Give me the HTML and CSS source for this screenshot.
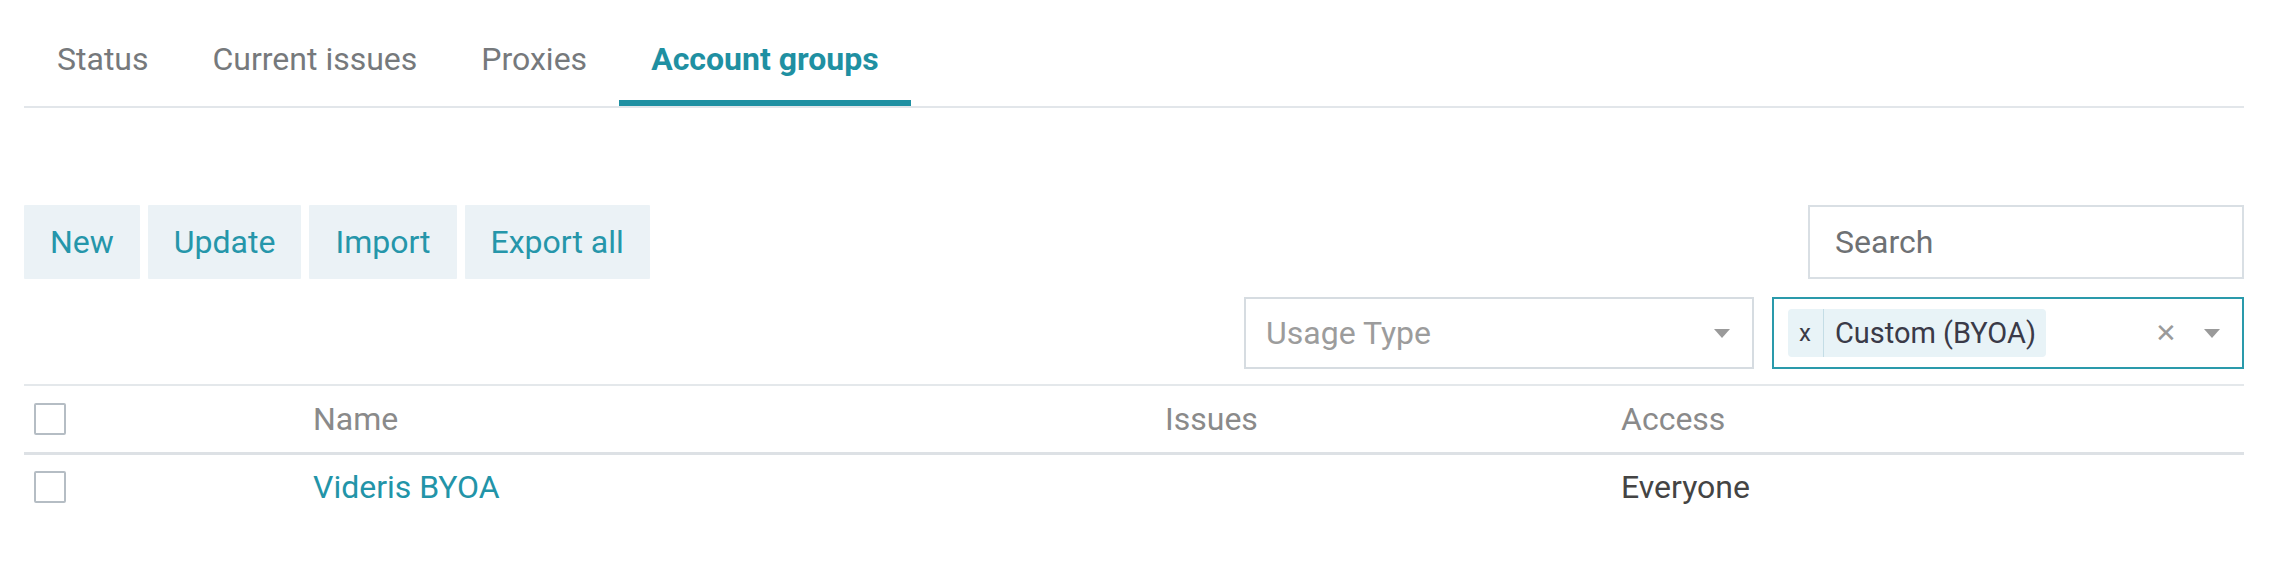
FILE: index.html
```html
<!DOCTYPE html>
<html lang="en">
<head>
<meta charset="utf-8">
<title>Account groups</title>
<link rel="stylesheet" href="styles.css">
</head>
<body>
<div class="page">
  <nav class="tabs">
    <a class="tab">Status</a>
    <a class="tab">Current issues</a>
    <a class="tab">Proxies</a>
    <a class="tab active">Account groups</a>
  </nav>

  <div class="toolbar">
    <div class="actions">
      <button class="btn">New</button>
      <button class="btn">Update</button>
      <button class="btn">Import</button>
      <button class="btn">Export all</button>
    </div>
    <input class="search" type="text" placeholder="Search">
  </div>

  <div class="filters">
    <div class="select usage">
      <span class="placeholder">Usage Type</span>
      <span class="arrow"></span>
    </div>
    <div class="select custom">
      <span class="chip"><span class="chip-x">x</span><span class="chip-label">Custom (BYOA)</span></span>
      <span class="clear">&#x2715;</span>
      <span class="arrow"></span>
    </div>
  </div>

  <div class="table">
    <div class="row head">
      <div class="cell check"><span class="box"></span></div>
      <div class="cell">Name</div>
      <div class="cell">Issues</div>
      <div class="cell">Access</div>
    </div>
    <div class="row body">
      <div class="cell check"><span class="box"></span></div>
      <div class="cell"><a class="link">Videris BYOA</a></div>
      <div class="cell"></div>
      <div class="cell">Everyone</div>
    </div>
  </div>
</div>
</body>
</html>
```
FILE: styles.css
```css
* { box-sizing: border-box; }
html, body { margin: 0; background: #fff; }
body {
  font-family: Roboto, "Noto Sans", "Liberation Sans", sans-serif;
  font-size: 32px;
  color: #3c3c3c;
}
.page { padding: 0 48px 0 24px; }

.tabs {
  display: flex;
  padding-left: 1px;
  border-bottom: 2px solid #e2e6ea;
}
.tab {
  padding: 41px 32px 23px;
  line-height: 36px;
  border-bottom: 6px solid transparent;
  color: #76797c;
  text-decoration: none;
}
.tab.active {
  color: #1f90a2;
  font-weight: 700;
  border-bottom-color: #1f90a2;
}

.toolbar {
  margin-top: 97px;
  display: flex;
  justify-content: space-between;
  align-items: flex-start;
}
.actions { display: flex; gap: 8px; }
.btn {
  height: 74px;
  padding: 0 26px;
  border: none;
  border-radius: 1px;
  background: #ebf2f6;
  color: #2596aa;
  font: inherit;
}
.search {
  width: 436px;
  height: 74px;
  border: 2px solid #d9dfe4;
  padding: 0 25px;
  font: inherit;
  color: #555;
  outline: none;
}
.search::placeholder { color: #6e7174; }

.filters {
  margin-top: 18px;
  display: flex;
  justify-content: flex-end;
  gap: 18px;
}
.select {
  height: 72px;
  border: 2px solid #d6dce1;
  display: flex;
  align-items: center;
  background: #fff;
}
.select.usage { width: 510px; padding: 0 22px 0 20px; }
.select.custom { width: 472px; border-color: #2a9aab; padding: 0 22px 0 14px; }
.placeholder { color: #9c9c9c; flex: 1; }
.arrow {
  width: 0; height: 0;
  border-left: 8px solid transparent;
  border-right: 8px solid transparent;
  border-top: 9px solid #9a9a9a;
}
.chip {
  height: 48px;
  display: flex;
  align-items: center;
  background: #e8f3f7;
  border-radius: 4px;
  font-size: 29px;
}
.chip-x {
  font-size: 24px;
  color: #3a3a46;
  padding: 0 12px 0 11px;
  align-self: stretch;
  display: flex;
  align-items: center;
  border-right: 1px solid #c4dde6;
}
.chip-label { padding: 0 10px 0 11px; color: #3a3a48; }
.clear {
  margin-left: auto;
  margin-right: 27px;
  color: #9a9a9a;
  font-size: 26px;
}

.table { margin-top: 15px; border-top: 2px solid #e4e8eb; }
.row {
  display: grid;
  grid-template-columns: 289px 852px 456px 1fr;
  align-items: center;
}
.row.head { height: 69px; border-bottom: 3px solid #dde1e5; color: #8a8a8a; }
.row.body { height: 64px; color: #444; }
.cell.check { padding-left: 10px; display: flex; align-items: center; }
.box {
  width: 32px; height: 32px;
  border: 2px solid #b5bdc4;
  border-radius: 2px;
  background: #fff;
}
.link { color: #2294a8; text-decoration: none; }
```
